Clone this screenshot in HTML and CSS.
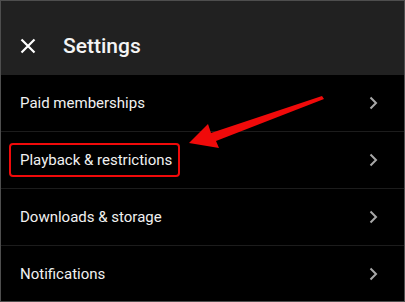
FILE: index.html
```html
<!DOCTYPE html>
<html>
<head>
<meta charset="utf-8">
<link rel="stylesheet" href="styles.css">
</head>
<body>
<div class="screen">
  <header class="bar">
    <svg class="close" width="16" height="16" viewBox="0 0 16 16"><path d="M1.5 1.5 L14.5 14.5 M14.5 1.5 L1.5 14.5" stroke="#fff" stroke-width="2.2" fill="none"/></svg>
    <h1 class="title">Settings</h1>
  </header>
  <ul class="list">
    <li class="row"><span class="label">Paid memberships</span><svg class="chev" width="9" height="14" viewBox="0 0 9 14"><path d="M1.5 1.5 L7 7 L1.5 12.5" stroke="#a8a8a8" stroke-width="2" fill="none"/></svg></li>
    <li class="row"><span class="label boxed">Playback &amp; restrictions</span><svg class="chev" width="9" height="14" viewBox="0 0 9 14"><path d="M1.5 1.5 L7 7 L1.5 12.5" stroke="#a8a8a8" stroke-width="2" fill="none"/></svg></li>
    <li class="row"><span class="label">Downloads &amp; storage</span><svg class="chev" width="9" height="14" viewBox="0 0 9 14"><path d="M1.5 1.5 L7 7 L1.5 12.5" stroke="#a8a8a8" stroke-width="2" fill="none"/></svg></li>
    <li class="row"><span class="label">Notifications</span><svg class="chev" width="9" height="14" viewBox="0 0 9 14"><path d="M1.5 1.5 L7 7 L1.5 12.5" stroke="#a8a8a8" stroke-width="2" fill="none"/></svg></li>
  </ul>
  <svg class="arrow" width="405" height="302" viewBox="0 0 405 302"><polygon points="189,143 208,124 211,133 322,96 324,99 216,141 219,148" fill="#f00a0a"/></svg>
</div>
</body>
</html>
```
FILE: styles.css
```css
html, body {
  margin: 0;
  padding: 0;
  background: #000;
}
.screen {
  position: relative;
  width: 405px;
  height: 302px;
  box-sizing: border-box;
  border: 1px solid #4e4e4e;
  background: #000;
  font-family: Roboto, "Liberation Sans", sans-serif;
  overflow: hidden;
}
.bar {
  height: 74px;
  background: #212121;
  display: flex;
  align-items: center;
  padding: 0 0 0 19px;
  box-sizing: border-box;
  padding-top: 16px;
}
.close {
  display: block;
  flex: none;
}
.title {
  margin: 0 0 0 27px;
  font-size: 21px;
  font-weight: 500;
  color: #f4f4f4;
  line-height: 24px;
}
.list {
  list-style: none;
  margin: 0;
  padding: 0;
}
.row {
  height: 56px;
  display: flex;
  align-items: center;
  justify-content: space-between;
  padding: 0 26px 0 19px;
  border-bottom: 1px solid #1c1c1c;
}
.row:last-child {
  border-bottom: none;
}
.label {
  position: relative;
  font-size: 15px;
  line-height: 18px;
  color: #f1f1f1;
}
.boxed::after {
  content: "";
  position: absolute;
  left: -11px;
  right: -8px;
  top: -8px;
  bottom: -8px;
  border: 2px solid #f00a0a;
  border-radius: 4px;
}
.chev {
  display: block;
  flex: none;
}
.arrow {
  position: absolute;
  left: -1px;
  top: -1px;
  pointer-events: none;
}
```
